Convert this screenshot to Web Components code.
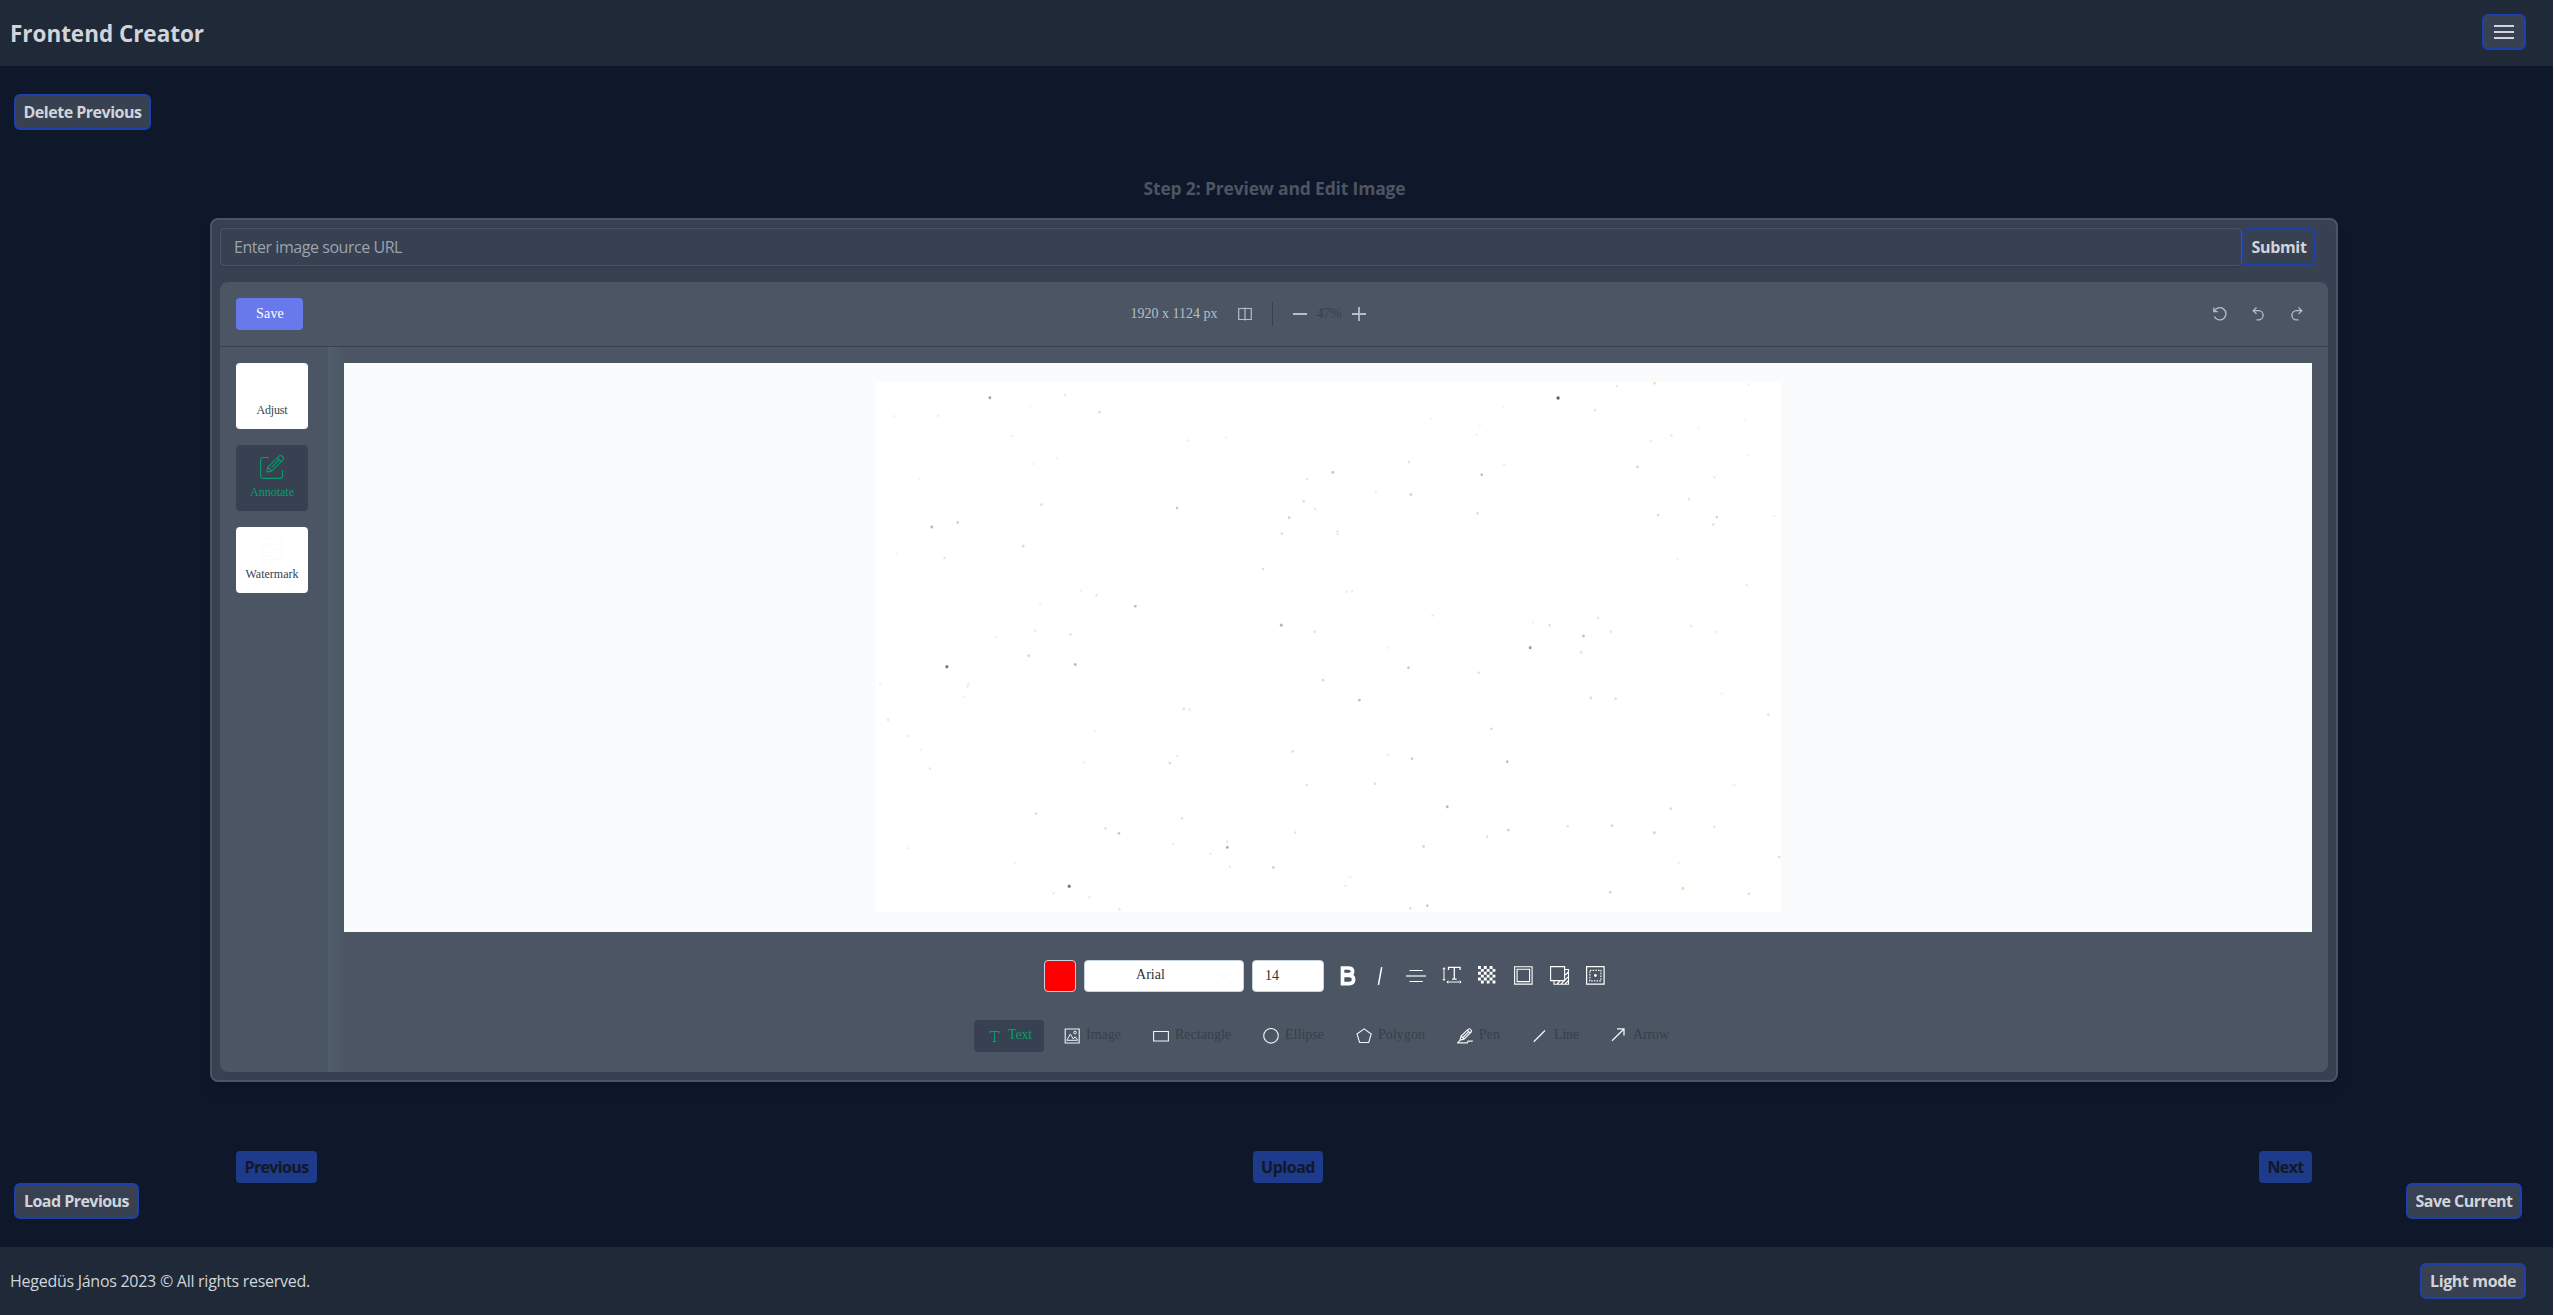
<!DOCTYPE html>
<html lang="en">
<head>
<meta charset="utf-8">
<title>Frontend Creator</title>
<style>
html{background:#fff;overflow:hidden}
body{margin:0;width:2553px;height:1315px;font-family:"Open Sans",sans-serif;font-size:16px;line-height:24px;color:#d1d5db;background:#0f172a}
</style>
</head>
<body>
<creator-app></creator-app>
<script>
const define = (name, html, setup) => customElements.define(name, class extends HTMLElement {
  connectedCallback() {
    if (this.shadowRoot) return;
    const t = document.createElement('template');
    t.innerHTML = typeof html === 'function' ? html(this) : html;
    this.attachShadow({ mode: 'open' }).append(t.content.cloneNode(true));
    if (setup) setup(this);
  }
});

/* Text run tracked out to a fixed advance width. */
define('fit-text', `<style>:host{display:inline-block;white-space:nowrap}</style><slot></slot>`, el => {
  const w = +el.getAttribute('w');
  el.style.letterSpacing = '0';
  const r = document.createRange();
  r.selectNodeContents(el);
  const natural = r.getBoundingClientRect().width;
  el.style.letterSpacing = ((w - natural) / el.textContent.length).toFixed(3) + 'px';
  el.style.width = w + 'px';
});

const ICONS = {
  menu: ['0 0 20 14', '<path d="M0 1h20M0 7h20M0 13h20" stroke-width="2"/>'],
  compare: ['0 0 14 14', '<path d="M.7 1.5h12.6v11H.7zM7 .5v13" stroke-width="1.2"/>'],
  minus: ['0 0 14 14', '<path d="M0 7h14" stroke-width="1.8"/>'],
  plus: ['0 0 14 14', '<path d="M0 7h14M7 0v14" stroke-width="1.8"/>'],
  reset: ['0 0 14 14', '<path d="M.8.6v4h4M1.2 4.4A6.1 6.1 0 1 1 1.4 9.6" stroke-width="1.3"/>'],
  undo: ['0 0 14 14', '<path d="M4.500.500 1.200 3.700 4.500 6.900M1.200 3.700H6.500a4.600 4.600 0 0 1 0 9.200H4.500" stroke-width="1.3"/>'],
  redo: ['0 0 14 14', '<path d="M8.500.500 11.800 3.700 8.500 6.900M11.800 3.700H6.500a4.600 4.600 0 0 0 0 9.200H8.500" stroke-width="1.3"/>'],
  adjust: ['0 0 24 24', '<path d="M1.5 8V1.5H8M16 1.5h6.5V8M22.5 16v6.5H16M8 22.5H1.5V16" stroke-width="1"/>'],
  annotate: ['0 0 24 24', '<path d="M9 2.5H3A2.4 2.4 0 0 0 .6 4.9V21A2.4 2.4 0 0 0 3 23.4h17A2.4 2.4 0 0 0 22.6 21v-6M7 17l.8-4.8L19.2 1.1a1.9 1.9 0 0 1 2.8 0l.9.9a1.9 1.9 0 0 1 0 2.8L11.8 16.1zM8 12.3l3.6 3.7M17.3 3l3.6 3.6M18.8 5.2l-7.3 7.4" stroke-width="1.1"/>'],
  watermark: ['0 0 24 24', '<path d="M1 1.5h20.500v21H1zM1 13l7-6 7 7 3-2 3.500 2M3 16h7M3 19h7" stroke-width="1"/><circle cx="16.500" cy="6.500" r="2"/>'],
  text: ['0 0 16 16', '<path d="M4.200 5.500V3.500h8.600v2M8.500 3.500v10M6.800 13.500h3.400" stroke-width="1.1"/>'],
  image: ['0 0 16 16', '<path d="M1.200 1h14v14h-14z" stroke-width="1.1"/><path d="M2.800 12.300 6.300 6l3 5 1.800-2.300 2.600 3.600z" stroke-width="1"/><circle cx="11" cy="4.500" r="1.300" stroke-width="1"/>'],
  rectangle: ['0 0 16 16', '<path d="M.6 3.500h14.800v9.500H.6z" stroke-width="1.1"/>'],
  ellipse: ['0 0 16 16', '<circle cx="8" cy="7.800" r="7.300" stroke-width="1.1"/>'],
  polygon: ['0 0 16 16', '<path d="M8.200.9 15.200 6 12.700 14.500H3.600L1 6z" stroke-width="1.1"/>'],
  pen: ['0 0 16 16', '<path d="M4 8.300 11.200 1.200a1.300 1.300 0 0 1 2 0l.9 1a1.300 1.300 0 0 1 0 1.800L7 11.200 3 12.200zM4.500 8.500l2.400 2.400M6 9.500l6.200-6.300M10.300 2.200l2.800 2.800M3 12.300l-2.300 2.500h9.600l.8-1.600h4.700" stroke-width="1.200"/>'],
  line: ['0 0 16 16', '<path d="M1.800 13.700 13 2.500" stroke-width="1.3"/>'],
  arrow: ['0 0 16 16', '<path d="M1 12.800 12.700 1.200M6 .8h7v6.700" stroke-width="1.3"/>'],
  bold: ['0 0 20 20', '<path d="M3.500 2H9.300Q13.600 2 13.600 5.600 13.600 8.700 9.300 8.700H3.500zM3.500 9.500H10Q14.600 9.500 14.600 13.600 14.600 17.700 10 17.700H3.500z" stroke-width="3.700"/>'],
  italic: ['0 0 20 20', '<path d="M10.700 1.200 7.400 18.800" stroke-width="1.500"/>'],
  align: ['0 0 20 20', '<path d="M3.500 4.500h13.200M3.500 15.500h13.200" stroke-width="1.200"/><path d="M0 10h20" stroke-width="1.600" opacity=".75"/>'],
  spacing: ['0 0 20 20', '<path d="M2 2v12M.8 3.200 2 1.600 3.200 3.200M.8 13 2 14.500 3.200 13M5 16h14M6.300 14.700 4.900 16l1.400 1.400M17.700 14.700 19.100 16l-1.400 1.400" stroke-width="1"/><path d="M6.500 4V1.300h11.600V4M12.300 1.300v12M10 13.200h4.700" stroke-width="1.300"/>'],
  opacity: ['0 0 20 20', (() => { let d = ''; for (let r = 0; r < 6; r++) for (let c = 0; c < 6; c++) if ((r + c) % 2 === 0) d += `M${c * 2.9} ${r * 2.9}h2.900v2.900h-2.900z`; return `<path d="${d}" fill="currentColor" stroke="none"/>`; })()],
  stroke: ['0 0 20 20', '<path d="M.6 .7h17.500v17.400H.6zM3.100 3.200h12.500v12.400H3.100z" stroke-width="1.100"/>'],
  shadow: ['0 0 20 20', '<path d="M.6 .6h14v14H.6zM15 3.500h3.500v14.800H4v-3.500M7 18l3-3M11 18l7-7M15 18l3.500-3.500M15.300 9l3-3" stroke-width="1.100"/>'],
  position: ['0 0 20 20', '<path d="M.6 .7h17.500v17.500H.6z" stroke-width="1.200"/><path d="M3.900 4.300h11v10.500h-11z" stroke-width="1.200" stroke-dasharray="1.500 1.200"/><circle cx="9.400" cy="9.500" r="1.400" fill="currentColor" stroke="none"/>'],
  chevron: ['0 0 10 10', '<path d="M1.500 3 5 6.800 8.500 3" stroke-width="1"/>']
};
define('app-icon', el => {
  const [vb, body] = ICONS[el.getAttribute('name')];
  return `<style>:host{display:inline-flex;flex:none}svg{display:block}</style><svg width="${el.getAttribute('w')}" height="${el.getAttribute('h') || el.getAttribute('w')}" viewBox="${vb}" fill="none" stroke="currentColor">${body}</svg>`;
});

define('outline-button', `<style>
:host{display:inline-flex;align-items:center;justify-content:center;box-sizing:border-box;height:36px;border:2px solid #1e40af;border-radius:6px;background:#374151;color:#d1d5db;font-weight:700}
</style><slot></slot>`);

define('solid-button', `<style>
:host{display:inline-flex;align-items:center;justify-content:center;box-sizing:border-box;height:32px;border-radius:4px;background:#1e3a8a;color:#111827;font-weight:700}
</style><slot></slot>`);

define('app-header', `<style>
:host{display:flex;align-items:center;justify-content:space-between;box-sizing:border-box;height:66px;padding:0 27px 2px 10px;background:#1f2937}
h1{margin:0;padding-top:3px;font-size:22.500px;line-height:32px;font-weight:700}
</style>
<h1><fit-text w="194">Frontend Creator</fit-text></h1>
<outline-button style="width:44px"><app-icon name="menu" w="20" h="14"></app-icon></outline-button>`);

define('app-footer', `<style>
:host{display:flex;align-items:center;justify-content:space-between;box-sizing:border-box;height:68px;padding:0 27px 0 10px;background:#1f2937}
</style>
<fit-text w="300">Hegedüs János 2023 © All rights reserved.</fit-text>
<outline-button style="width:106px"><fit-text w="86">Light mode</fit-text></outline-button>`);

define('url-form', `<style>
:host{display:flex;height:38px}
.field{flex:1;box-sizing:border-box;display:flex;align-items:center;border:1px solid #4b5563;border-radius:4px;padding:0 13px;color:#9ca3af;box-shadow:0 1px 2px rgba(0,0,0,.12)}
outline-button{width:74px;height:38px;margin-right:12px}
</style>
<div class="field"><fit-text w="168">Enter image source URL</fit-text></div>
<outline-button><fit-text w="55">Submit</fit-text></outline-button>`);

define('editor-topbar', `<style>
:host{display:grid;grid-template-columns:1fr auto 1fr;align-items:center;height:64px;padding:0 16px;border-bottom:1px solid #374151;font-size:14px;color:#b3c0ca}
.save{width:67px;height:32px;border-radius:4px;background:#6879eb;color:#fff;display:flex;align-items:center;justify-content:center}
.save fit-text{margin-left:1px}
.mid{display:flex;align-items:center;margin-right:52px}
.mid,.save{line-height:22px}
.sep{width:1px;height:24px;background:#374151;margin:0 20px}
.pct{color:#37414b;margin:0 10px}
.hist{display:flex;justify-content:flex-end;gap:24.500px;padding-right:8px}
</style>
<div><div class="save"><fit-text w="28">Save</fit-text></div></div>
<div class="mid"><fit-text w="87">1920 x 1124 px</fit-text><app-icon name="compare" w="14" style="margin-left:20px"></app-icon><span class="sep"></span><app-icon name="minus" w="14"></app-icon><fit-text class="pct" w="25">47%</fit-text><app-icon name="plus" w="14"></app-icon></div>
<div class="hist"><app-icon name="reset" w="14"></app-icon><app-icon name="undo" w="14"></app-icon><app-icon name="redo" w="14"></app-icon></div>`);

define('side-tab', el => `<style>
:host{display:flex;flex-direction:column;align-items:center;box-sizing:border-box;width:72px;height:66px;padding-top:10px;border-radius:4px;background:#fff;color:#374151;font-size:12px;line-height:16px}
:host([active]){background:#374151;color:#0b9b6a}
app-icon{color:#fafbfc}:host([active]) app-icon{color:#0b9b6a}
slot{display:block;margin-top:5px}
</style><app-icon name="${el.getAttribute('icon')}" w="24"></app-icon><slot></slot>`);

const SPECKS = [[213,105,.5],[337,98,.12],[394,145,.3,'#8a8050'],[279,130,.06],[55,156,.08],[128,155,.1],[250,211,.1],[540,223,.1],[603,215,.08],[323,271,.09],[285,287,.07],[96,327,.08],[1310,65,.6,'#e6cf4a'],[1248,73,.12],[1466,69,.08],[1151,106,.9],[1212,139,.16],[1061,132,.08],[942,163,.07],[1022,180,.06],[1017,207,.08],[1338,209,.15],[1304,224,.1],[1383,187,.06],[1459,165,.06],[1464,264,.08],[779,310,.4,'#40606a'],[737,329,.14],[905,282,.18],[1062,289,.1],[1025,317,.35],[1282,295,.25],[1409,324,.1],[908,371,.25],[850,363,.1],[1367,384,.15],[731,390,.2],[750,411,.12],[298,399,.2],[522,408,.3],[707,435,.25],[1018,423,.2],[1316,428,.2],[1413,433,.25],[1407,454,.18],[1508,430,.08],[160,448,.28],[117,460,.4],[695,478,.18],[787,472,.14],[787,480,.12],[268,513,.22],[60,534,.08],[138,545,.15],[664,576,.2],[1348,549,.07],[1462,620,.12],[802,638,.12],[811,636,.1],[363,635,.09],[389,648,.14],[453,678,.35],[296,672,.07],[694,730,.45],[749,748,.18],[944,703,.12],[1217,710,.12],[1109,723,.08],[1137,730,.18],[1193,760,.35],[1238,748,.15],[1371,732,.12],[1412,748,.1],[1105,792,.55],[1189,805,.16],[288,745,.11],[346,755,.18],[223,763,.08],[277,814,.25],[142,844,.75],[354,838,.4],[904,847,.3],[871,792,.08],[1020,861,.18],[763,881,.22],[823,936,.35],[177,892,.1],[176,900,.1],[171,928,.08],[32,891,.08],[1205,930,.22],[1246,932,.2],[1421,918,.08],[1498,976,.18],[533,960,.18],[543,962,.12],[45,990,.14],[1041,1015,.2],[387,1021,.08],[77,1035,.1],[713,1077,.2],[99,1073,.08],[522,1089,.1],[510,1109,.22],[369,1107,.09],[910,1097,.28],[1067,1105,.35],[871,1086,.09],[114,1124,.13],[736,1169,.16],[849,1166,.2],[1442,1170,.09],[968,1229,.4],[1337,1234,.22],[289,1248,.2],[530,1261,.18],[404,1288,.18],[426,1302,.32],[717,1300,.15],[1069,1293,.28],[1034,1311,.18],[1167,1283,.16],[1240,1281,.24],[1310,1300,.28],[1409,1284,.15],[605,1325,.15],[605,1340,.45],[516,1332,.1],[577,1358,.12],[929,1338,.25],[1516,1367,.2],[79,1343,.09],[254,1383,.08],[609,1394,.12],[681,1396,.28],[1350,1383,.09],[344,1447,.75],[808,1421,.1],[800,1446,.11],[1357,1453,.55,'#e0b440'],[1237,1464,.25],[1466,1468,.2],[318,1467,.1],[377,1478,.1],[427,1511,.15],[907,1508,.2],[935,1501,.3]];
define('image-canvas', `<style>
:host{display:flex;align-items:center;justify-content:center;height:569px;background:#f9fbfd}
svg{display:block;background:#fff;margin-bottom:1px}
</style><svg width="905" height="530" viewBox="25 62 1494 1456" preserveAspectRatio="none">${SPECKS.map(([x, y, o, c]) => `<ellipse cx="${x}" cy="${y}" rx="${(1.9 + o).toFixed(2)}" ry="${((1.9 + o) * 1.8).toFixed(2)}" fill="${c || '#303438'}" opacity="${(o * .85).toFixed(2)}"/>`).join('')}</svg>`);

define('text-options', `<style>
:host{display:flex;justify-content:center;align-items:center;height:32px;gap:8px;font-size:14px;color:#fff}
div{box-sizing:border-box;height:32px;border:1px solid #c9d6e0;border-radius:4px;background:#fff;color:#33303a;display:flex;align-items:center}
.swatch{width:32px;background:#f00}
.font{width:160px;padding:0 14px 0 51px;justify-content:space-between}
.font fit-text{margin-top:-2px}
.font app-icon{color:#f0f2f4}
.size{width:72px;padding-left:12px}
.tools{display:flex;gap:16px;margin:0 6px 0 7px}
.tools app-icon:nth-child(2){margin-left:-4px}
.tools app-icon:nth-child(3){margin-left:-1px}
</style>
<div class="swatch"></div>
<div class="font"><fit-text w="29">Arial</fit-text><app-icon name="chevron" w="10"></app-icon></div>
<div class="size"><fit-text w="14">14</fit-text></div>
<span class="tools">${['bold', 'italic', 'align', 'spacing', 'opacity', 'stroke', 'shadow', 'position'].map(n => `<app-icon name="${n}" w="20"></app-icon>`).join('')}</span>`);

define('tool-item', el => `<style>
:host{display:flex;align-items:center;gap:6px;box-sizing:border-box;height:32px;padding:0 12px;border-radius:4px;color:#374049;line-height:22px}
app-icon{color:#f1f4f6}
slot{display:block;margin-top:-2px}
:host([active]){background:#374151;color:#0b9b6a}
:host([active]) app-icon{color:#0b9b6a}
</style><app-icon name="${el.getAttribute('icon')}" w="16"></app-icon><slot></slot>`);

define('tool-bar', `<style>
:host{display:flex;justify-content:center;gap:8px;font-size:14px;padding-right:1px}
</style>${[['Text', 24], ['Image', 35], ['Rectangle', 56], ['Ellipse', 39], ['Polygon', 47], ['Pen', 21], ['Line', 25], ['Arrow', 36]].map(([t, w], i) => `<tool-item icon="${t.toLowerCase()}"${i ? '' : ' active'}><fit-text w="${w}">${t}</fit-text></tool-item>`).join('')}`);

define('image-editor', `<style>
:host{display:flex;flex-direction:column;height:790px;border-radius:8px;background:#4b5563;overflow:hidden;font-family:"Liberation Serif",serif}
.body{flex:1;display:flex}
aside{width:76px;padding:16px;display:flex;flex-direction:column;gap:16px}
main{flex:1;padding:16px 16px 20px;background:linear-gradient(90deg,#505e6a,#4b5563 18px);display:flex;flex-direction:column}
text-options{margin-top:28px}
tool-bar{margin-top:28px}
</style>
<editor-topbar></editor-topbar>
<div class="body">
<aside><side-tab icon="adjust"><fit-text w="31">Adjust</fit-text></side-tab><side-tab icon="annotate" active><fit-text w="44">Annotate</fit-text></side-tab><side-tab icon="watermark"><fit-text w="53">Watermark</fit-text></side-tab></aside>
<main><image-canvas></image-canvas><text-options></text-options><tool-bar></tool-bar></main>
</div>`);

define('creator-app', `<style>
:host{display:flex;flex-direction:column;height:1315px}
.top{padding:28px 14px 0;height:36px;display:flex}
h2{margin:46px 0 0;font-size:17.500px;line-height:24px;font-weight:700;color:#4b5563;display:flex;justify-content:center}
h2 fit-text{margin-right:4px}
.card{box-sizing:border-box;width:2128px;height:864px;margin:18px 0 0 210px;padding:8px;border:2px solid #4b5563;border-radius:8px;background:#374151;box-shadow:0 10px 15px -3px rgba(0,0,0,.15)}
image-editor{margin-top:16px}
.nav{display:flex;justify-content:space-between;margin:69px 241px 0 236px;height:32px}
.bottom{display:flex;justify-content:space-between;padding:0 31px 28px 14px}
</style>
<app-header></app-header>
<div class="top"><outline-button style="width:137px"><fit-text w="118">Delete Previous</fit-text></outline-button></div>
<h2><fit-text w="262">Step 2: Preview and Edit Image</fit-text></h2>
<section class="card"><url-form></url-form><image-editor></image-editor></section>
<div class="nav"><solid-button style="width:81px"><fit-text w="64">Previous</fit-text></solid-button><solid-button style="width:70px"><fit-text w="54">Upload</fit-text></solid-button><solid-button style="width:53px"><fit-text w="36">Next</fit-text></solid-button></div>
<div class="bottom"><outline-button style="width:125px"><fit-text w="105">Load Previous</fit-text></outline-button><outline-button style="width:116px"><fit-text w="97">Save Current</fit-text></outline-button></div>
<app-footer></app-footer>`);
</script>
</body>
</html>
